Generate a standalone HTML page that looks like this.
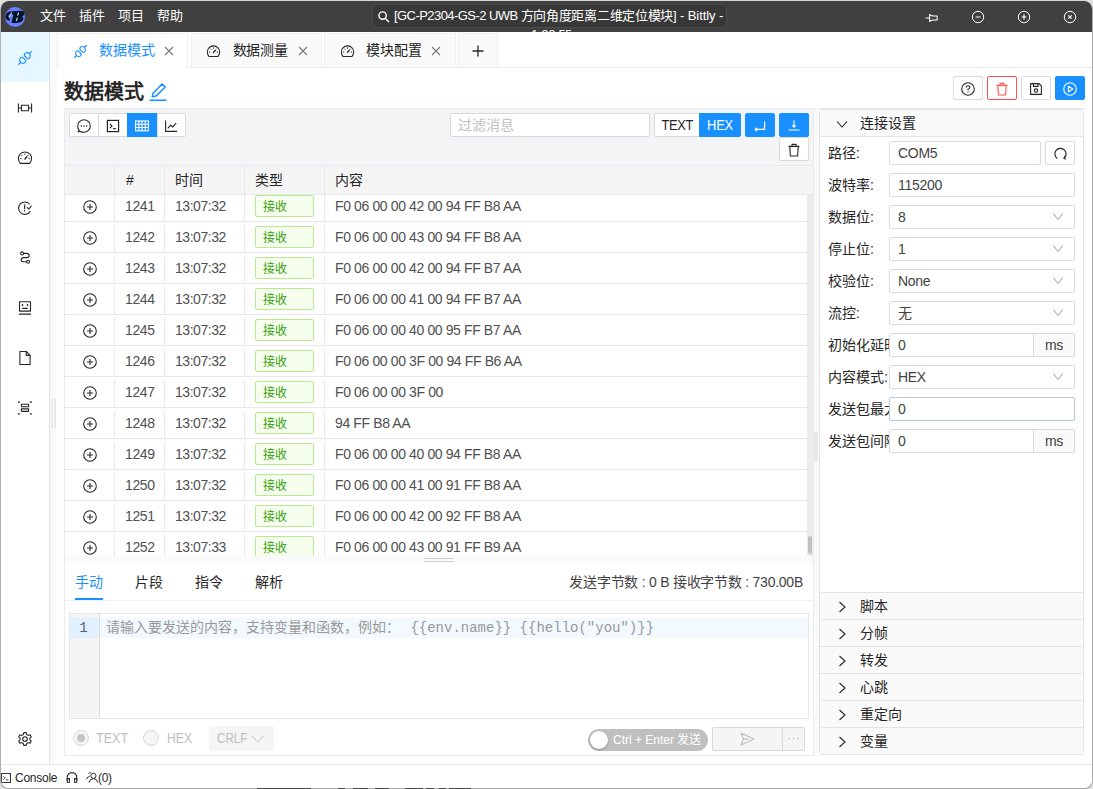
<!DOCTYPE html>
<html lang="zh-CN">
<head>
<meta charset="utf-8">
<title>[GC-P2304-GS-2 UWB 方向角度距离二维定位模块] - Bittly</title>
<style>
*{box-sizing:border-box;margin:0;padding:0}
html,body{width:1093px;height:789px;overflow:hidden}
body{background:#e2e2e2;font-family:"Liberation Sans",sans-serif;font-size:14px;color:#262626;position:relative}
#win{position:absolute;left:1px;top:1px;width:1091px;height:787px;border-radius:8px;overflow:hidden;background:#fff;box-shadow:1px 1px 0 0 #ababab,-1px 1px 0 0 #b0b0b0,0 -1px 0 0 #d6d6d6}
#o{position:absolute;left:-1px;top:-1px;width:1093px;height:789px}
.abs{position:absolute}
svg{display:block;overflow:visible}
/* title bar */
#title{position:absolute;left:0;top:0;width:1093px;height:32px;background:#404040;color:#fff}
#title .menu{position:absolute;top:7px;font-size:13px;line-height:18px;white-space:nowrap}
#search{position:absolute;left:372px;top:4px;width:355px;height:24px;border:1px solid #4b4b4b;border-radius:5px;background:#383838;overflow:hidden}
#search .txt{position:absolute;left:21px;top:2px;font-size:13px;line-height:18px;white-space:nowrap;letter-spacing:-0.36px}
/* sidebar */
#side{position:absolute;left:1px;top:32px;width:49px;height:732px;background:#fff;border-right:1px solid #dfe1ea}
#side .act{position:absolute;left:0;top:0;width:48px;height:50px;background:#e6f7ff}
#side .ic{position:absolute;left:16px;width:16px;height:16px}
#vsplit1{position:absolute;left:50px;top:32px;width:7px;height:732px;background:#fafafa}
#vsplit1 b{position:absolute;left:1px;top:366px;width:5px;height:30px;border-left:2px solid #e9e9e9;border-right:2px solid #e9e9e9}
/* tabs */
#tabs{position:absolute;left:57px;top:32px;width:1035px;height:36px;border-bottom:1px solid #ececec;background:#fff}
.tab{position:absolute;top:1px;height:34px;width:131.5px;background:#fafafa;border:1px solid #f0f0f0;border-bottom:0;font-size:14px;line-height:19px;white-space:nowrap}
.tab.on{background:#fff;color:#1890ff;height:35px;width:131px}
.tab .lbl{position:absolute;left:41px;top:7px;letter-spacing:-0.1px}
.tab .x{position:absolute;left:106px;top:12px}
.tab .ti{position:absolute;left:14.5px;top:9.5px}
/* heading */
#h1{position:absolute;left:64px;top:78px;font-size:20px;line-height:28px;font-weight:bold;color:#262626;white-space:nowrap}
.hbtn{position:absolute;top:76px;width:30px;height:24px;border:1px solid #d9d9d9;border-radius:2px;background:#fff}
/* main panel */
#main{position:absolute;left:64px;top:108px;width:750px;height:648px;border:1px solid #e8eaf0;background:#fff}
#tbar{position:absolute;left:0;top:0;width:748px;height:56px;background:#f3f4f5}
.btn{position:absolute;height:24px;border:1px solid #d9d9d9;background:#fff;font-size:14px;line-height:22px;text-align:center;color:#262626}
.btn.blue{background:#1890ff;border-color:#1890ff;color:#fff}
#thead{position:absolute;left:0;top:56px;width:748px;height:30px;background:#f5f5f5;border-top:1px solid #e8e8e8;border-bottom:1px solid #e8e8e8}
#thead span{position:absolute;top:5px;font-size:14px;line-height:19px;color:#262626}
#thead i{position:absolute;top:0;width:1px;height:28px;background:#e8e8e8}
#tbody{position:absolute;left:0;top:86px;width:748px;height:361px;overflow:hidden;background:#fff}
.row{position:absolute;left:0;width:742px;height:31px;border-bottom:1px solid #e8e8e8;font-size:14px;line-height:19px;color:#505050;white-space:nowrap}
.row span{position:absolute;top:6px}
.row i{position:absolute;top:3px;width:1px;height:27px;background:#e9e9e9}
.row .n{left:60px;letter-spacing:-0.35px}
.row .t{left:110px;letter-spacing:-0.45px}
.row .c{left:270px;letter-spacing:-0.38px}
.row .tag{position:absolute;left:190px;top:4px;width:59px;height:22px;border:1px solid #b7eb8f;background:#f6ffed;border-radius:2px;color:#389e0d;font-size:12px;line-height:22px;padding-left:7px}
.row .plus{position:absolute;left:18px;top:9px}

.sbar{position:absolute;left:742px;top:0;width:6px;height:361px;background:#ececec}
.sbar b{position:absolute;left:1px;top:341px;width:4px;height:18px;border-radius:3px;background:#c1c1c1}
#hsplit{position:absolute;left:0;top:447px;width:748px;height:7px;background:#fafafa}
#hsplit b{position:absolute;left:359px;top:2px;width:30px;height:4px;border-top:1px solid #d0d0d0;border-bottom:1px solid #d0d0d0}
#btabs{position:absolute;left:0;top:454px;width:748px;height:38px;border-bottom:1px solid #f0f0f0;background:#fff}
#btabs span{position:absolute;top:10px;font-size:14px;line-height:19px;color:#262626;white-space:nowrap}
#btabs .ink{position:absolute;left:10px;top:35px;width:28px;height:2px;background:#1890ff}
#editor{position:absolute;left:4px;top:504px;width:740px;height:106px;border:1px solid #e4e6ee;background:#fff}
#editor .gut{position:absolute;left:0;top:0;width:30px;height:104px;background:#f5f5f5;border-right:1px solid #ddd}
#editor .line{position:absolute;left:0;top:4px;width:738px;height:20px;background:#f2f9ff}
#editor .ln{position:absolute;left:0;top:4px;width:29px;height:20px;background:#e2f1fe;padding-right:2px;text-align:center;font-family:"Liberation Mono",monospace;font-size:14px;line-height:20px;color:#5c6370}
#editor .ph{position:absolute;left:36px;top:4px;height:20px;font-family:"Liberation Mono",monospace;font-size:14px;line-height:20px;color:#999;white-space:nowrap}
#ctl{position:absolute;left:0;top:612px;width:748px;height:34px}
.radio{position:absolute;top:9px;width:16px;height:16px;border:1px solid #d9d9d9;border-radius:50%;background:#f5f5f5}
.radio.on:after{content:"";position:absolute;left:3px;top:3px;width:8px;height:8px;border-radius:50%;background:#c4c4c4}
#ctl .rl{position:absolute;top:8px;font-size:14px;line-height:19px;color:#bfbfbf;transform-origin:0 50%}
#status{position:absolute;left:1px;top:764px;width:1091px;height:24px;border-top:1px solid #e8e8ee;background:#fff;font-size:12px;line-height:16px;color:#262626}
#vsplit2{position:absolute;left:814px;top:108px;width:272px;height:648px;background:linear-gradient(#ebebef,#ebebef) 0 0/272px 1px no-repeat,linear-gradient(#fafafa,#fafafa) 0 0/6px 648px no-repeat}
#right{position:absolute;left:819px;top:109px;width:265px;height:645px;border:1px solid #e3e3e3;background:#fff;border-radius:2px}
.ph2{position:absolute;left:0;width:263px;height:27px;background:#fafafa;border-bottom:1px solid #e3e3e3;font-size:14px;line-height:19px;color:#262626}
.ph2 span{position:absolute;left:40px;top:4px}
.ph2 svg{position:absolute;left:16px;top:8px}
.fl{position:absolute;left:8px;font-size:14px;line-height:19px;color:#262626;white-space:nowrap;width:61px;overflow:hidden}
.fi{position:absolute;left:69px;width:186px;height:24px;border:1px solid #d9d9d9;border-radius:2px;background:#fff;font-size:14px;line-height:22px;padding-left:8px;color:#434343;letter-spacing:-0.3px}
.fi svg{position:absolute;right:10px;top:6px}
.fi .ad{position:absolute;right:-1px;top:-1px;width:42px;height:24px;border:1px solid #d9d9d9;background:#fafafa;text-align:center;border-radius:0 2px 2px 0}
.sx{display:inline-block;transform:scaleX(.92);transform-origin:50% 50%}
#vsplit2 b{position:absolute;left:0;top:324px;width:4px;height:30px;background:#e9e9e9}
</style>
</head>
<body>
<div id="win"><div id="o">

<!-- TITLE BAR -->
<div id="title">
  <svg class="abs" style="left:5px;top:7px" width="20" height="20" viewBox="0 0 20 20"><circle cx="10" cy="10" r="10" fill="#6b7cff"/><path d="M8.2 4.2Q13 3.4 17.2 3.9Q19.9 4.6 19.3 7Q18.8 8.7 17 9.4Q18.9 10.3 18.2 12.6Q17.3 15.4 13.2 15.8Q9 16.2 6.4 15.4L8.4 8Q6.9 6.3 4.9 6.9Q3.4 7.6 3.2 9.6Q3.6 11.2 5.6 10.4L4.6 13.4Q1.4 13.8 0.4 10.4Q0.6 5.6 5 4.4Q6.8 4 8.2 4.2Z" fill="#001529"/><path d="M4.4 11.2L6.6 5.2" stroke="#dfe4ff" stroke-width="0.9"/><path d="M13.6 5.6L12.6 8.6M12.4 10.6L11.4 13.8" stroke="#dfe4ff" stroke-width="1.1"/></svg>
  <span class="menu" style="left:40px">文件</span>
  <span class="menu" style="left:79px">插件</span>
  <span class="menu" style="left:118px">项目</span>
  <span class="menu" style="left:157px">帮助</span>
  <svg class="abs" style="left:924.5px;top:12.5px" width="13" height="10" viewBox="0 0 14 11" fill="none" stroke="#fff" stroke-width="1.15" stroke-linejoin="round"><path d="M0.5 5.5H5"/><path d="M5 1V10"/><path d="M5 2L8.4 3.2H13.2V7.8H8.4L5 9"/></svg>
  <svg class="abs" style="left:971px;top:10px" width="14" height="14" viewBox="0 0 14 14" fill="none" stroke="#fff" stroke-width="1"><circle cx="7" cy="7" r="5.7"/><path d="M4.6 7H9.4" stroke-width="1.2"/></svg>
  <svg class="abs" style="left:1017px;top:10px" width="14" height="14" viewBox="0 0 14 14" fill="none" stroke="#fff" stroke-width="1"><circle cx="7" cy="7" r="5.7"/><path d="M4.6 7H9.4M7 4.6V9.4" stroke-width="1.2"/></svg>
  <svg class="abs" style="left:1063px;top:10px" width="14" height="14" viewBox="0 0 14 14" fill="none" stroke="#fff" stroke-width="1"><circle cx="7" cy="7" r="5.7"/><path d="M5.3 5.3L8.7 8.7M8.7 5.3L5.3 8.7" stroke-width="1.1"/></svg>
  <div class="abs" style="left:531px;top:30px;width:40px;height:2px;overflow:hidden"><span class="abs" style="left:0;top:-4px;font-size:13px;line-height:18px;letter-spacing:-0.3px;white-space:nowrap">1.23.55</span></div>
  <div id="search">
    <svg class="abs" style="left:5px;top:6px" width="12" height="12" viewBox="0 0 12 12" fill="none" stroke="#fff" stroke-width="1.4"><circle cx="4.6" cy="4.6" r="3.7"/><path d="M7.4 7.4L11 11"/></svg>
    <span class="txt"><span id="t1" style="letter-spacing:-0.56px">[GC-P2304-GS-2 UWB </span><span id="t2" style="letter-spacing:-0.3px">方向角度距离二维定位模块</span><span id="t3" style="letter-spacing:-0.1px">] - Bittly -</span></span>
  </div>
</div>

<!-- SIDEBAR -->
<div id="side">
  <div class="act"></div>
  <div class="ic" style="top:18px"><svg width="16" height="16" viewBox="0 0 16 16" fill="none" stroke="#1890ff" stroke-width="1.1" stroke-linecap="round" stroke-linejoin="round"><path d="M1.6 14.4L3.7 12.3M12.3 3.7L14.4 1.6" stroke-width="1.2"/><path d="M5.6 7.3L8.7 10.4Q9 12.2 7.4 13Q5.2 13.8 3.6 12.4Q2.2 10.8 3 8.6Q3.8 7 5.6 7.3Z" stroke-width="1.2"/><path d="M10.4 8.7L7.3 5.6Q7 3.8 8.6 3Q10.8 2.2 12.4 3.6Q13.8 5.2 13 7.4Q12.2 9 10.4 8.7Z" stroke-width="1.2"/></svg></div>
  <div class="ic" style="top:68px"><svg width="16" height="16" viewBox="0 0 16 16" fill="none" stroke="#262626" stroke-width="1.1" stroke-linecap="round" stroke-linejoin="round"><path d="M1.4 3.9V12.1M14.6 3.9V12.1"/><rect x="4.4" y="5.3" width="7.2" height="5.4"/><path d="M1.4 8H4.4M11.6 8H14.6"/></svg></div>
  <div class="ic" style="top:118px"><svg width="16" height="16" viewBox="0 0 16 16" fill="none" stroke="#262626" stroke-width="1.1" stroke-linecap="round" stroke-linejoin="round"><path d="M3.3 13.4Q1.4 11.2 1.4 8.6A6.6 6.6 0 0 1 14.6 8.6Q14.6 11.2 12.7 13.4Z"/><path d="M7.9 9L9.9 6.7" stroke-width="1.4"/><path d="M8 4V4.6M4.8 5.3L5.2 5.7M3.5 8.6H4.1M11.9 8.6H12.5M11.2 5.3L10.8 5.7" stroke-width="1"/></svg></div>
  <div class="ic" style="top:168px"><svg width="16" height="16" viewBox="0 0 16 16" fill="none" stroke="#262626" stroke-width="1.1" stroke-linecap="round" stroke-linejoin="round"><path d="M13.1 11.4A6.2 6.2 0 1 1 12.4 4"/><path d="M7.7 4.8V8.6M7.7 10.4V10.9" stroke-width="1.2"/><path d="M10.4 7.6L11.8 9L14.2 6.2"/></svg></div>
  <div class="ic" style="top:218px"><svg width="16" height="16" viewBox="0 0 16 16" fill="none" stroke="#262626" stroke-width="1.1" stroke-linecap="round" stroke-linejoin="round"><circle cx="5.1" cy="3.4" r="1.5"/><circle cx="11.1" cy="11.8" r="1.5"/><path d="M6.6 3.4H9.6Q12.2 3.5 12.2 5.5Q12.2 7.6 9.6 7.6H6.6Q4.2 7.7 4.2 9.7Q4.2 11.8 6.6 11.8H9.6"/></svg></div>
  <div class="ic" style="top:268px"><svg width="16" height="16" viewBox="0 0 16 16" fill="none" stroke="#262626" stroke-width="1.1" stroke-linecap="round" stroke-linejoin="round"><rect x="2.5" y="1.7" width="11" height="9.4"/><path d="M2.4 14.1H13.6" stroke-width="1.3"/><path d="M5.7 8.4H10.3" stroke-width="1.2"/><path d="M5.5 4.8V5.6M10.5 4.8V5.6" stroke-width="1.5"/></svg></div>
  <div class="ic" style="top:318px"><svg width="16" height="16" viewBox="0 0 16 16" fill="none" stroke="#262626" stroke-width="1.1" stroke-linecap="round" stroke-linejoin="round"><path d="M2.9 1.5H9.3L13.1 5.3V14.5H2.9Z"/><path d="M9.2 1.6V5.4H13"/></svg></div>
  <div class="ic" style="top:368px"><svg width="16" height="16" viewBox="0 0 16 16" fill="none" stroke="#262626" stroke-width="1.1" stroke-linecap="round" stroke-linejoin="round"><rect x="4.4" y="4.3" width="7.2" height="2.5" rx=".3"/><rect x="4.4" y="8.9" width="7.2" height="2.5" rx=".3"/><path d="M1.5 1.6H2.5V2.6H1.5ZM13.5 1.6H14.5V2.6H13.5ZM1.5 13.4H2.5V14.4H1.5ZM13.5 13.4H14.5V14.4H13.5Z" fill="#262626" stroke-width=".5"/></svg></div>
  <div class="ic" style="top:699px"><svg width="16" height="16" viewBox="0 0 16 16" fill="none" stroke="#262626" stroke-width="1.1" stroke-linecap="round" stroke-linejoin="round"><circle cx="8" cy="8" r="2.3"/><path d="M6.8 1.6H9.2L9.7 3.5L11.2 4.4L13.1 3.8L14.3 5.9L12.9 7.2V8.8L14.3 10.1L13.1 12.2L11.2 11.6L9.7 12.5L9.2 14.4H6.8L6.3 12.5L4.8 11.6L2.9 12.2L1.7 10.1L3.1 8.8V7.2L1.7 5.9L2.9 3.8L4.8 4.4L6.3 3.5Z"/></svg></div>
</div>
<div id="vsplit1"><b></b></div>

<!-- TABS -->
<div id="tabs">
  <div class="tab on" style="left:0"><span class="ti"><svg width="15" height="15" viewBox="0 0 16 16" fill="none" stroke="#1890ff" stroke-width="1.1" stroke-linecap="round" stroke-linejoin="round"><path d="M1.6 14.4L3.7 12.3M12.3 3.7L14.4 1.6" stroke-width="1.2"/><path d="M5.6 7.3L8.7 10.4Q9 12.2 7.4 13Q5.2 13.8 3.6 12.4Q2.2 10.8 3 8.6Q3.8 7 5.6 7.3Z" stroke-width="1.2"/><path d="M10.4 8.7L7.3 5.6Q7 3.8 8.6 3Q10.8 2.2 12.4 3.6Q13.8 5.2 13 7.4Q12.2 9 10.4 8.7Z" stroke-width="1.2"/></svg></span><span class="lbl">数据模式</span><svg class="x" width="10" height="10" viewBox="0 0 10 10" fill="none" stroke="#7a7a7a" stroke-width="1.1"><path d="M1 1L9 9M9 1L1 9"/></svg></div>
  <div class="tab" style="left:133.5px"><span class="ti"><svg width="15" height="15" viewBox="0 0 16 16" fill="none" stroke="#262626" stroke-width="1.1" stroke-linecap="round" stroke-linejoin="round"><path d="M3.3 13.4Q1.4 11.2 1.4 8.6A6.6 6.6 0 0 1 14.6 8.6Q14.6 11.2 12.7 13.4Z"/><path d="M7.9 9L9.9 6.7" stroke-width="1.4"/><path d="M8 4V4.6M4.8 5.3L5.2 5.7M3.5 8.6H4.1M11.9 8.6H12.5M11.2 5.3L10.8 5.7" stroke-width="1"/></svg></span><span class="lbl">数据测量</span><svg class="x" width="10" height="10" viewBox="0 0 10 10" fill="none" stroke="#7a7a7a" stroke-width="1.1"><path d="M1 1L9 9M9 1L1 9"/></svg></div>
  <div class="tab" style="left:267px"><span class="ti"><svg width="15" height="15" viewBox="0 0 16 16" fill="none" stroke="#262626" stroke-width="1.1" stroke-linecap="round" stroke-linejoin="round"><path d="M3.3 13.4Q1.4 11.2 1.4 8.6A6.6 6.6 0 0 1 14.6 8.6Q14.6 11.2 12.7 13.4Z"/><path d="M7.9 9L9.9 6.7" stroke-width="1.4"/><path d="M8 4V4.6M4.8 5.3L5.2 5.7M3.5 8.6H4.1M11.9 8.6H12.5M11.2 5.3L10.8 5.7" stroke-width="1"/></svg></span><span class="lbl">模块配置</span><svg class="x" width="10" height="10" viewBox="0 0 10 10" fill="none" stroke="#7a7a7a" stroke-width="1.1"><path d="M1 1L9 9M9 1L1 9"/></svg></div>
  <div class="tab" style="left:401px;width:40px"><svg class="abs" style="left:13px;top:11px" width="12" height="12" viewBox="0 0 12 12" fill="none" stroke="#262626" stroke-width="1.3"><path d="M6 0.5V11.5M0.5 6H11.5"/></svg></div>
</div>

<div id="h1">数据模式</div>
<svg class="abs" style="left:149px;top:83px" width="18" height="18" viewBox="0 0 18 18" fill="none" stroke="#1890ff" stroke-width="1.4" stroke-linejoin="round"><path d="M0.5 17.2H17.5" stroke-width="1.5"/><path d="M3.3 13.7L4 10.2L13.2 1L16.2 4L7 13.1Z" stroke-width="1.5"/></svg>
<div class="hbtn" style="left:953px"><svg class="abs" style="left:7px;top:5px" width="14" height="14" viewBox="0 0 14 14" fill="none" stroke="#262626" stroke-width="1.1"><circle cx="7" cy="7" r="6.3"/><path d="M5.2 5.6Q5.2 3.8 7 3.8Q8.8 3.8 8.8 5.4Q8.8 6.5 7 7.2V8.3M7 9.6V10.6"/></svg></div>
<div class="hbtn" style="left:987px;border-color:#ff4d4f"><svg class="abs" style="left:7px;top:5px" width="14" height="14" viewBox="0 0 14 14" fill="none" stroke="#ff4d4f" stroke-width="1.1" stroke-linejoin="round"><path d="M1.5 3.4H12.5M5 3.2V1.4H9V3.2M2.8 3.6L3.4 13H10.6L11.2 3.6"/></svg></div>
<div class="hbtn" style="left:1021px"><svg class="abs" style="left:7px;top:5px" width="14" height="14" viewBox="0 0 14 14" fill="none" stroke="#262626" stroke-width="1.1" stroke-linejoin="round"><path d="M1.6 1.6H10L12.4 4V12.4H1.6Z"/><path d="M4.4 1.8V4.4H9V1.8"/><circle cx="7" cy="8.6" r="1.7"/></svg></div>
<div class="hbtn" style="left:1055px;background:#1890ff;border-color:#1890ff"><svg class="abs" style="left:7px;top:5px" width="14" height="14" viewBox="0 0 14 14" fill="none" stroke="#fff" stroke-width="1.1" stroke-linejoin="round"><circle cx="7" cy="7" r="6.3"/><path d="M5.4 4.2L9.8 7L5.4 9.8Z"/></svg></div>

<!-- MAIN PANEL -->
<div id="main">
  <div id="tbar">
    <div class="btn" style="left:4px;top:4px;width:30px;border-radius:2px 0 0 2px"><svg class="abs" style="left:7px;top:5px" width="14" height="14" viewBox="0 0 14 14" fill="none" stroke="#262626" stroke-width="1.1" stroke-linejoin="round"><path d="M2.2 11.6Q0.7 9.6 0.7 7A6.3 6.3 0 1 1 7 13.3Q4.6 13.3 2.9 12.2L1 12.9Z"/><path d="M4.3 7H4.4M7 7H7.1M9.6 7H9.7" stroke-width="1.4" stroke-linecap="round"/></svg></div>
    <div class="btn" style="left:33px;top:4px;width:30px"><svg class="abs" style="left:7px;top:5px" width="14" height="14" viewBox="0 0 14 14" fill="none" stroke="#262626" stroke-width="1.1"><rect x="1.4" y="1.4" width="11.2" height="11.2" stroke-width="1.2"/><path d="M3.8 4.8L6 7L3.8 9.2M7 9.6H9.8" stroke-width="1.1"/></svg></div>
    <div class="btn blue" style="left:62px;top:4px;width:31px"><svg class="abs" style="left:7px;top:5px" width="14" height="14" viewBox="0 0 14 14" fill="none" stroke="#fff" stroke-width="1.1"><rect x="0.6" y="2" width="12.8" height="9.8"/><path d="M0.6 5.3H13.4M0.6 8.5H13.4M3.8 2V11.8M7 2V11.8M10.2 2V11.8"/></svg></div>
    <div class="btn" style="left:92px;top:4px;width:29px;border-radius:0 2px 2px 0"><svg class="abs" style="left:6px;top:5px" width="14" height="14" viewBox="0 0 14 14" fill="none" stroke="#262626" stroke-width="1.1" stroke-linejoin="round"><path d="M1.6 1.4V12.4H13"/><path d="M3.8 9.4L6.6 6.2L8.6 8L12.2 4.2"/></svg></div>
    <div class="btn" style="left:385px;top:4px;width:200px;border-radius:2px;text-align:left;padding-left:7px;color:#bfbfbf">过滤消息</div>
    <div class="btn" style="left:589px;top:4px;width:46px;border-radius:2px 0 0 2px;letter-spacing:-0.3px"><span class="sx">TEXT</span></div>
    <div class="btn blue" style="left:634px;top:4px;width:42px;border-radius:0 2px 2px 0;letter-spacing:-0.3px"><span class="sx">HEX</span></div>
    <div class="btn blue" style="left:680px;top:4px;width:30px;border-radius:2px"><svg class="abs" style="left:8px;top:5px" width="12" height="12" viewBox="0 0 12 12" fill="none" stroke="#fff" stroke-width="1.2"><path d="M10.6 2.6V10.4H1.2M3 8.8L1.2 10.4L3 12"/></svg></div>
    <div class="btn blue" style="left:714px;top:4px;width:30px;border-radius:2px"><svg class="abs" style="left:8px;top:6px" width="12" height="12" viewBox="0 0 12 12" fill="none" stroke="#fff" stroke-width="1.2"><path d="M6 0.6V7M4.4 5.4L6 7.2L7.6 5.4M0.6 10H11.4"/></svg></div>
    <div class="btn" style="left:714px;top:28px;width:30px;border-radius:2px"><svg class="abs" style="left:7px;top:5px" width="14" height="14" viewBox="0 0 14 14" fill="none" stroke="#262626" stroke-width="1.1" stroke-linejoin="round"><path d="M1.5 3.4H12.5M5 3.2V1.4H9V3.2M2.8 3.6L3.4 13H10.6L11.2 3.6"/></svg></div>
  </div>
  <div id="thead">
    <i style="left:49px"></i><i style="left:99px"></i><i style="left:179px"></i><i style="left:259px"></i>
    <span style="left:61px">#</span><span style="left:110px">时间</span><span style="left:190px">类型</span><span style="left:270px">内容</span>
  </div>
  <div id="tbody">
    <div class="row" style="top:-4px"><svg class="plus" width="14" height="14" viewBox="0 0 14 14" fill="none" stroke="#262626" stroke-width="1.1"><circle cx="7" cy="7" r="6.3"/><path d="M4 7H10M7 4V10"/></svg><i style="left:49px"></i><i style="left:99px"></i><i style="left:179px"></i><i style="left:259px"></i><span class="n">1241</span><span class="t">13:07:32</span><div class="tag">接收</div><span class="c">F0 06 00 00 42 00 94 FF B8 AA</span></div>
    <div class="row" style="top:27px"><svg class="plus" width="14" height="14" viewBox="0 0 14 14" fill="none" stroke="#262626" stroke-width="1.1"><circle cx="7" cy="7" r="6.3"/><path d="M4 7H10M7 4V10"/></svg><i style="left:49px"></i><i style="left:99px"></i><i style="left:179px"></i><i style="left:259px"></i><span class="n">1242</span><span class="t">13:07:32</span><div class="tag">接收</div><span class="c">F0 06 00 00 43 00 94 FF B8 AA</span></div>
    <div class="row" style="top:58px"><svg class="plus" width="14" height="14" viewBox="0 0 14 14" fill="none" stroke="#262626" stroke-width="1.1"><circle cx="7" cy="7" r="6.3"/><path d="M4 7H10M7 4V10"/></svg><i style="left:49px"></i><i style="left:99px"></i><i style="left:179px"></i><i style="left:259px"></i><span class="n">1243</span><span class="t">13:07:32</span><div class="tag">接收</div><span class="c">F0 06 00 00 42 00 94 FF B7 AA</span></div>
    <div class="row" style="top:89px"><svg class="plus" width="14" height="14" viewBox="0 0 14 14" fill="none" stroke="#262626" stroke-width="1.1"><circle cx="7" cy="7" r="6.3"/><path d="M4 7H10M7 4V10"/></svg><i style="left:49px"></i><i style="left:99px"></i><i style="left:179px"></i><i style="left:259px"></i><span class="n">1244</span><span class="t">13:07:32</span><div class="tag">接收</div><span class="c">F0 06 00 00 41 00 94 FF B7 AA</span></div>
    <div class="row" style="top:120px"><svg class="plus" width="14" height="14" viewBox="0 0 14 14" fill="none" stroke="#262626" stroke-width="1.1"><circle cx="7" cy="7" r="6.3"/><path d="M4 7H10M7 4V10"/></svg><i style="left:49px"></i><i style="left:99px"></i><i style="left:179px"></i><i style="left:259px"></i><span class="n">1245</span><span class="t">13:07:32</span><div class="tag">接收</div><span class="c">F0 06 00 00 40 00 95 FF B7 AA</span></div>
    <div class="row" style="top:151px"><svg class="plus" width="14" height="14" viewBox="0 0 14 14" fill="none" stroke="#262626" stroke-width="1.1"><circle cx="7" cy="7" r="6.3"/><path d="M4 7H10M7 4V10"/></svg><i style="left:49px"></i><i style="left:99px"></i><i style="left:179px"></i><i style="left:259px"></i><span class="n">1246</span><span class="t">13:07:32</span><div class="tag">接收</div><span class="c">F0 06 00 00 3F 00 94 FF B6 AA</span></div>
    <div class="row" style="top:182px"><svg class="plus" width="14" height="14" viewBox="0 0 14 14" fill="none" stroke="#262626" stroke-width="1.1"><circle cx="7" cy="7" r="6.3"/><path d="M4 7H10M7 4V10"/></svg><i style="left:49px"></i><i style="left:99px"></i><i style="left:179px"></i><i style="left:259px"></i><span class="n">1247</span><span class="t">13:07:32</span><div class="tag">接收</div><span class="c">F0 06 00 00 3F 00</span></div>
    <div class="row" style="top:213px"><svg class="plus" width="14" height="14" viewBox="0 0 14 14" fill="none" stroke="#262626" stroke-width="1.1"><circle cx="7" cy="7" r="6.3"/><path d="M4 7H10M7 4V10"/></svg><i style="left:49px"></i><i style="left:99px"></i><i style="left:179px"></i><i style="left:259px"></i><span class="n">1248</span><span class="t">13:07:32</span><div class="tag">接收</div><span class="c">94 FF B8 AA</span></div>
    <div class="row" style="top:244px"><svg class="plus" width="14" height="14" viewBox="0 0 14 14" fill="none" stroke="#262626" stroke-width="1.1"><circle cx="7" cy="7" r="6.3"/><path d="M4 7H10M7 4V10"/></svg><i style="left:49px"></i><i style="left:99px"></i><i style="left:179px"></i><i style="left:259px"></i><span class="n">1249</span><span class="t">13:07:32</span><div class="tag">接收</div><span class="c">F0 06 00 00 40 00 94 FF B8 AA</span></div>
    <div class="row" style="top:275px"><svg class="plus" width="14" height="14" viewBox="0 0 14 14" fill="none" stroke="#262626" stroke-width="1.1"><circle cx="7" cy="7" r="6.3"/><path d="M4 7H10M7 4V10"/></svg><i style="left:49px"></i><i style="left:99px"></i><i style="left:179px"></i><i style="left:259px"></i><span class="n">1250</span><span class="t">13:07:32</span><div class="tag">接收</div><span class="c">F0 06 00 00 41 00 91 FF B8 AA</span></div>
    <div class="row" style="top:306px"><svg class="plus" width="14" height="14" viewBox="0 0 14 14" fill="none" stroke="#262626" stroke-width="1.1"><circle cx="7" cy="7" r="6.3"/><path d="M4 7H10M7 4V10"/></svg><i style="left:49px"></i><i style="left:99px"></i><i style="left:179px"></i><i style="left:259px"></i><span class="n">1251</span><span class="t">13:07:32</span><div class="tag">接收</div><span class="c">F0 06 00 00 42 00 92 FF B8 AA</span></div>
    <div class="row" style="top:337px"><svg class="plus" width="14" height="14" viewBox="0 0 14 14" fill="none" stroke="#262626" stroke-width="1.1"><circle cx="7" cy="7" r="6.3"/><path d="M4 7H10M7 4V10"/></svg><i style="left:49px"></i><i style="left:99px"></i><i style="left:179px"></i><i style="left:259px"></i><span class="n">1252</span><span class="t">13:07:33</span><div class="tag">接收</div><span class="c">F0 06 00 00 43 00 91 FF B9 AA</span></div>
    <div class="sbar"><b></b></div>
  </div>
  <div id="hsplit"><b></b></div>
  <div id="btabs">
    <span style="left:10px;color:#1890ff">手动</span><span style="left:70px">片段</span><span style="left:130px">指令</span><span style="left:190px">解析</span>
    <div class="ink"></div>
    <span style="right:10px;letter-spacing:-0.25px;color:#434343">发送字节数 : 0 B 接收字节数 : 730.00B</span>
  </div>
  <div id="editor">
    <div class="line"></div>
    <div class="gut"></div>
    <div class="ln">1</div>
    <div class="ph">请输入要发送的内容，支持变量和函数，例如：<span style="padding-left:2px"> </span>{{env.name}} {{hello("you")}}</div>
  </div>
  <div id="ctl">
    <div class="radio on" style="left:8px"></div><span class="rl" style="left:31px;transform:scaleX(.9)">TEXT</span>
    <div class="radio" style="left:78px"></div><span class="rl" style="left:102px;transform:scaleX(.87)">HEX</span>
    <div class="abs" style="left:144px;top:5px;width:65px;height:25px;background:#f5f5f5;border-radius:2px;color:#bfbfbf;line-height:25px"><span class="abs" style="left:8px;top:0;transform:scaleX(.83);transform-origin:0 50%">CRLF</span><svg class="abs" style="left:42px;top:9px" width="13" height="8" viewBox="0 0 13 8" fill="none" stroke="#bfbfbf" stroke-width="1"><path d="M0.5 0.8L6.5 7L12.5 0.8"/></svg></div>
    <div class="abs" style="left:523px;top:8px;width:120px;height:22px;border-radius:11px;background:#bfbfbf;color:#fff;line-height:22px;white-space:nowrap;font-size:12px"><div class="abs" style="left:2px;top:2px;width:18px;height:18px;border-radius:50%;background:#fff;box-shadow:0 1px 2px rgba(0,0,0,.25)"></div><span class="abs" id="tgl" style="left:25px;top:0;transform:scaleX(1);transform-origin:0 50%">Ctrl + Enter 发送</span></div>
    <div class="abs" style="left:647px;top:6px;width:71px;height:24px;border:1px solid #d9d9d9;background:#f5f5f5;border-radius:2px 0 0 2px"><svg class="abs" style="left:27px;top:4px" width="15" height="14" viewBox="0 0 15 14" fill="none" stroke="#bfbfbf" stroke-width="1.1" stroke-linejoin="round"><path d="M1 1L14 7L1 13L3.6 7Z"/><path d="M3.6 7H9"/></svg></div>
    <div class="abs" style="left:717px;top:6px;width:23px;height:24px;border:1px solid #d9d9d9;background:#f5f5f5;border-radius:0 2px 2px 0;color:#bfbfbf;text-align:center;line-height:20px;letter-spacing:0.2px;font-size:13px">···</div>
  </div>
</div>

<div id="vsplit2"><b></b></div>
<div id="right">
  <div class="ph2" style="top:0;height:27px"><svg width="12" height="12" viewBox="0 0 12 12" fill="none" stroke="#262626" stroke-width="1.1"><path d="M1 3.5L6 9L11 3.5"/></svg><span>连接设置</span></div>
  <span class="fl" style="top:34px">路径:</span>
  <div class="fi" style="top:31px;width:152px">COM5</div><div class="fi" style="top:31px;left:225px;width:30px;padding:0"><svg style="position:absolute;left:8px;top:5px" width="13" height="13" viewBox="0 0 13 13" fill="none" stroke="#262626" stroke-width="1.2"><path d="M3.4 11.6A5.6 5.6 0 1 1 9.8 11.4"/><path d="M10.8 9.2L9.8 11.6L12.2 12" stroke-width="1"/></svg></div>
  <span class="fl" style="top:66px">波特率:</span>
  <div class="fi" style="top:63px">115200</div>
  <span class="fl" style="top:98px">数据位:</span>
  <div class="fi" style="top:95px">8<svg width="12" height="10" viewBox="0 0 12 10" fill="none" stroke="#b4b4b4" stroke-width="1.1"><path d="M1.4 1.8L6 7.4L10.6 1.8"/></svg></div>
  <span class="fl" style="top:130px">停止位:</span>
  <div class="fi" style="top:127px">1<svg width="12" height="10" viewBox="0 0 12 10" fill="none" stroke="#b4b4b4" stroke-width="1.1"><path d="M1.4 1.8L6 7.4L10.6 1.8"/></svg></div>
  <span class="fl" style="top:162px">校验位:</span>
  <div class="fi" style="top:159px">None<svg width="12" height="10" viewBox="0 0 12 10" fill="none" stroke="#b4b4b4" stroke-width="1.1"><path d="M1.4 1.8L6 7.4L10.6 1.8"/></svg></div>
  <span class="fl" style="top:194px">流控:</span>
  <div class="fi" style="top:191px">无<svg width="12" height="10" viewBox="0 0 12 10" fill="none" stroke="#b4b4b4" stroke-width="1.1"><path d="M1.4 1.8L6 7.4L10.6 1.8"/></svg></div>
  <span class="fl" style="top:226px">初始化延时:</span>
  <div class="fi" style="top:223px">0<div class="ad">ms</div></div>
  <span class="fl" style="top:258px">内容模式:</span>
  <div class="fi" style="top:255px">HEX<svg width="12" height="10" viewBox="0 0 12 10" fill="none" stroke="#b4b4b4" stroke-width="1.1"><path d="M1.4 1.8L6 7.4L10.6 1.8"/></svg></div>
  <span class="fl" style="top:290px">发送包最大:</span>
  <div class="fi" style="top:287px;border-color:#b5c9e3">0</div>
  <span class="fl" style="top:322px">发送包间隔:</span>
  <div class="fi" style="top:319px">0<div class="ad">ms</div></div>
  <div class="ph2" style="top:482px;border-top:1px solid #e3e3e3;height:28px"><svg width="12" height="12" viewBox="0 0 12 12" fill="none" stroke="#262626" stroke-width="1.1"><path d="M3.5 1L9 6L3.5 11"/></svg><span>脚本</span></div>
  <div class="ph2" style="top:509px;border-top:1px solid #e3e3e3;height:28px"><svg width="12" height="12" viewBox="0 0 12 12" fill="none" stroke="#262626" stroke-width="1.1"><path d="M3.5 1L9 6L3.5 11"/></svg><span>分帧</span></div>
  <div class="ph2" style="top:536px;border-top:1px solid #e3e3e3;height:28px"><svg width="12" height="12" viewBox="0 0 12 12" fill="none" stroke="#262626" stroke-width="1.1"><path d="M3.5 1L9 6L3.5 11"/></svg><span>转发</span></div>
  <div class="ph2" style="top:563px;border-top:1px solid #e3e3e3;height:28px"><svg width="12" height="12" viewBox="0 0 12 12" fill="none" stroke="#262626" stroke-width="1.1"><path d="M3.5 1L9 6L3.5 11"/></svg><span>心跳</span></div>
  <div class="ph2" style="top:590px;border-top:1px solid #e3e3e3;height:28px"><svg width="12" height="12" viewBox="0 0 12 12" fill="none" stroke="#262626" stroke-width="1.1"><path d="M3.5 1L9 6L3.5 11"/></svg><span>重定向</span></div>
  <div class="ph2" style="top:617px;border-top:1px solid #e3e3e3;height:28px"><svg width="12" height="12" viewBox="0 0 12 12" fill="none" stroke="#262626" stroke-width="1.1"><path d="M3.5 1L9 6L3.5 11"/></svg><span>变量</span></div>
</div>
<div id="status">
  <svg class="abs" style="left:0px;top:8px" width="10" height="10" viewBox="0 0 11 11" fill="none" stroke="#262626" stroke-width="1"><rect x=".5" y=".5" width="10" height="10"/><path d="M2.6 3.4L4.6 5.4L2.6 7.4M5.6 7.6H8.2" stroke-width=".9"/></svg>
  <span class="abs" style="left:14px;top:5px;letter-spacing:-0.25px">Console</span>
  <svg class="abs" style="left:65px;top:7px" width="12" height="11" viewBox="0 0 12 11" fill="none" stroke="#262626" stroke-width="1.1"><path d="M1.2 8V5.4A4.8 4.8 0 0 1 10.8 5.4V8"/><path d="M1.2 6.6H3.4V10.2H1.2ZM8.6 6.6H10.8V10.2H8.6Z"/></svg>
  <svg class="abs" style="left:85px;top:7px" width="13" height="11" viewBox="0 0 13 11" fill="none" stroke="#262626" stroke-width="1"><circle cx="7.4" cy="3.8" r="2.6"/><path d="M3 10.6Q3.6 6.8 7.4 6.6Q11.2 6.8 11.8 10.6"/><path d="M0.6 7.2Q1.4 4.6 3.6 4.2M2.6 1.4Q3.6 0.6 4.8 0.8"/></svg>
  <span class="abs" style="left:97px;top:5px;letter-spacing:-0.3px">(0)</span>
</div>

</div></div>
<div class="abs" style="left:257px;top:788px;width:214px;height:1px;background:linear-gradient(90deg,transparent 0px,#4a4a4a 0px,#4a4a4a 54px,transparent 54px,transparent 81px,#4a4a4a 81px,#4a4a4a 88px,transparent 88px,transparent 96px,#4a4a4a 96px,#4a4a4a 111px,transparent 111px,transparent 118px,#4a4a4a 118px,#4a4a4a 132px,transparent 132px,transparent 148px,#4a4a4a 148px,#4a4a4a 166px,transparent 166px,transparent 169px,#4a4a4a 169px,#4a4a4a 177px,transparent 177px,transparent 182px,#4a4a4a 182px,#4a4a4a 189px,transparent 189px,transparent 192px,#4a4a4a 192px,#4a4a4a 214px,transparent 214px)"></div>
</body>
</html>
